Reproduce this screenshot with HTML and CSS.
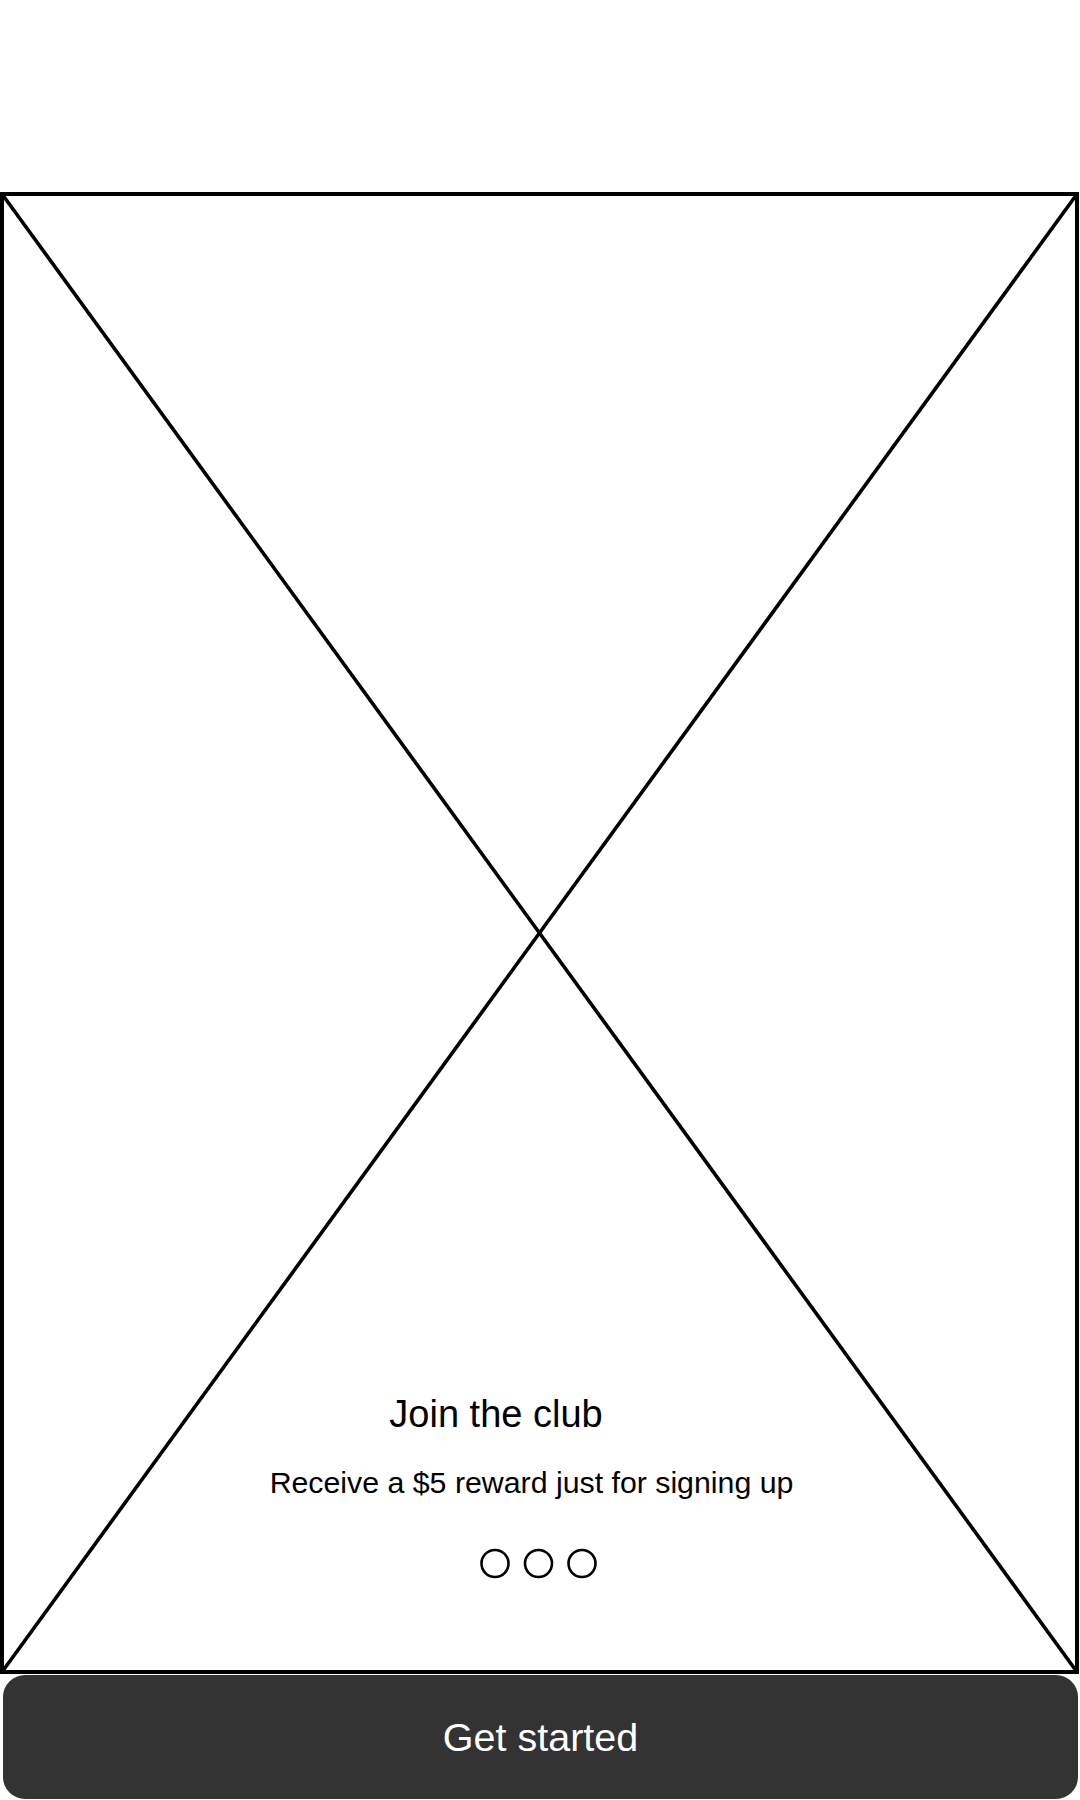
FILE: index.html
```html
<!DOCTYPE html>
<html lang="en">
<head>
<meta charset="utf-8">
<title>Join the club</title>
<link rel="stylesheet" href="styles.css">
</head>
<body>
<div class="page">
  <div class="top-space"></div>
  <div class="hero">
    <svg class="hero-x" viewBox="0 0 1079 1482" preserveAspectRatio="none" aria-hidden="true">
      <line x1="2" y1="2" x2="1077" y2="1480"/>
      <line x1="1077" y1="2" x2="2" y2="1480"/>
    </svg>
    <div class="hero-content">
      <h1 class="title">Join the club</h1>
      <p class="subtitle">Receive a $5 reward just for signing up</p>
      <svg class="dots" width="121" height="31" viewBox="0 0 121 31" aria-hidden="true">
        <circle cx="17" cy="15.5" r="13.5"/>
        <circle cx="60.5" cy="15.5" r="13.5"/>
        <circle cx="104" cy="15.5" r="13.5"/>
      </svg>
    </div>
  </div>
  <button class="cta">Get started</button>
</div>
</body>
</html>
```
FILE: styles.css
```css
html, body {
  margin: 0;
  padding: 0;
  background: #ffffff;
}
body {
  font-family: "Liberation Sans", Arial, Helvetica, sans-serif;
  color: #000000;
}
.page {
  width: 1080px;
  height: 1800px;
  display: flex;
  flex-direction: column;
  overflow: hidden;
}
.top-space {
  height: 192px;
  flex: none;
}
.hero {
  position: relative;
  box-sizing: border-box;
  width: 1079px;
  height: 1482px;
  border: 4px solid #000000;
  flex: none;
}
.hero-x {
  position: absolute;
  top: -4px;
  left: -4px;
  width: 1079px;
  height: 1482px;
}
.hero-x line {
  stroke: #000000;
  stroke-width: 3.6;
}
.hero-content {
  position: relative;
  display: flex;
  flex-direction: column;
  align-items: center;
  padding-top: 1199px;
}
.title {
  margin: 0 87px 0 0;
  font-size: 38px;
  line-height: 38px;
  font-weight: normal;
}
.subtitle {
  margin: 35px 16px 0 0;
  font-size: 30.3px;
  line-height: 30px;
}
.dots {
  margin: 50px 3px 0 0;
  display: block;
}
.dots circle {
  fill: none;
  stroke: #000000;
  stroke-width: 2.6;
}
.cta {
  margin: 1px 0 0 3px;
  width: 1075px;
  height: 124px;
  border: none;
  border-radius: 22px;
  background: #333333;
  color: #ffffff;
  font-family: "Liberation Sans", Arial, Helvetica, sans-serif;
  font-size: 39.5px;
  padding: 0;
  flex: none;
}
```
